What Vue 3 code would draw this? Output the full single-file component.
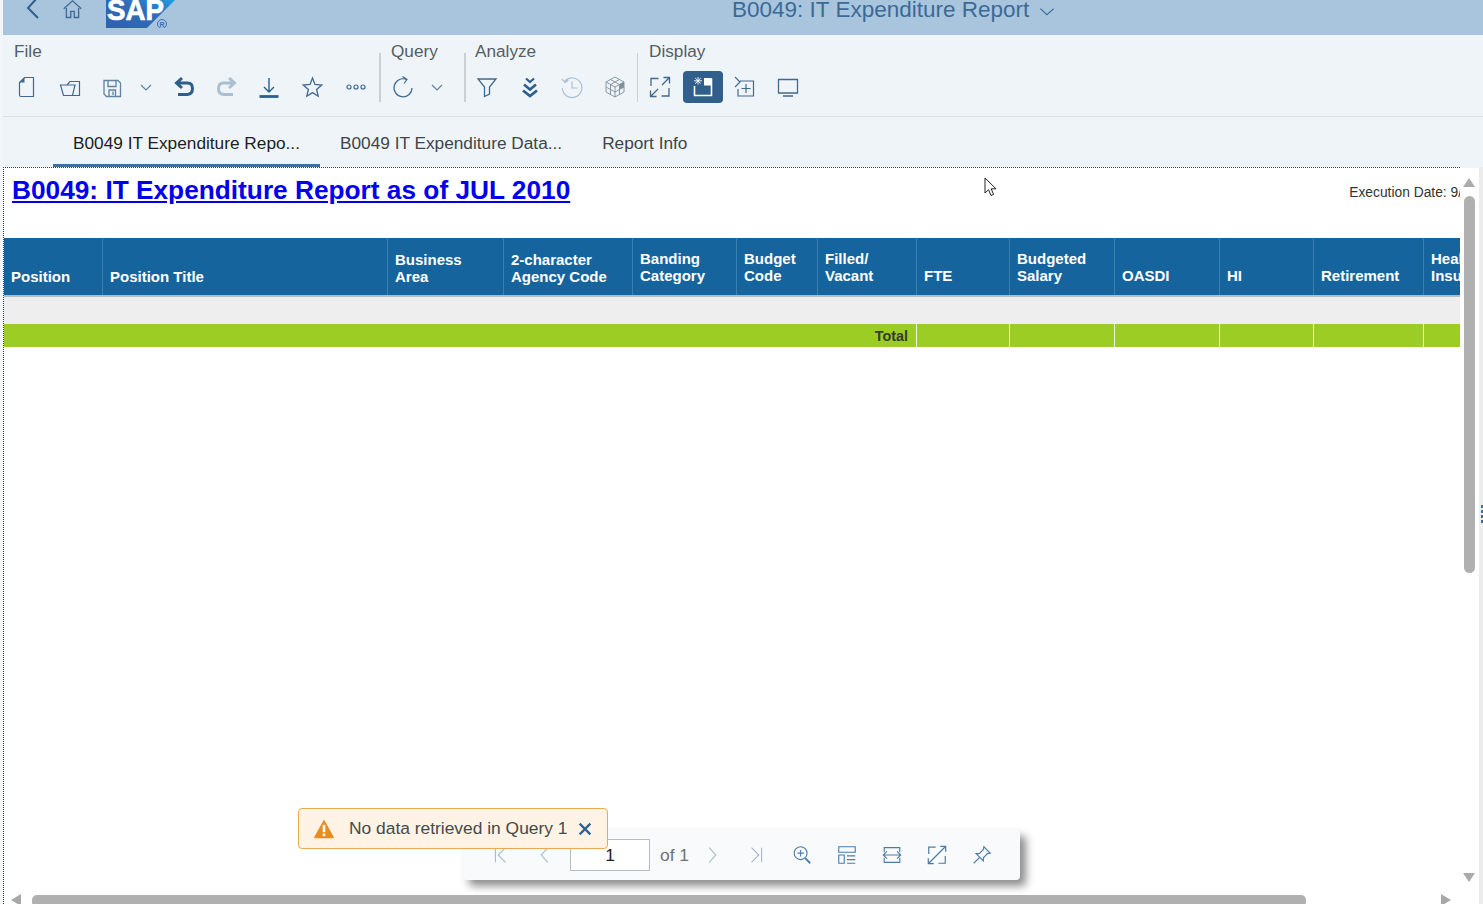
<script setup>
const icons = {
  doc: [{ d: 'M4.5 7.5 9.5 2.5H18.5V21.5H6q-1.5 0-1.5-1.5Z' }, { d: 'M4.5 7.5 9.5 2.5V7.5Z', f: 1 }],
  folder: [{ d: 'M2.5 10H17L14.5 20.5H5.5Z' }, { d: 'M9 10 12 6.5H21.5V20.5H14.5' }],
  save: [{ d: 'M4 5.5H18L20.5 8V21.5H6.5L4 19Z M8 5.5V11.5H16V5.5 M9 21.5V15H15.5V21.5 M13 16.5V20', w: 1.3 }],
  chev: [{ d: 'M7 10 12 15 17 10' }],
  undo: [{ d: 'M10 3 4.5 8 10 13 M4.5 8H15.5Q20.5 8 20.5 13.5T15.5 19.5H6', w: 3 }],
  redo: [{ d: 'M14 3 19.5 8 14 13 M19.5 8H8.5Q3.5 8 3.5 13.5T8.5 19.5H18', w: 3 }],
  down: [{ d: 'M12 3V17 M7 12 12 17 17 12', w: 1.4 }, { d: 'M2.5 21.5H21.5', w: 2.8 }],
  star: [{ d: 'M12.5 3 15 9.4 21.8 10 16.6 14.4 18.2 21.2 12.5 17.6 6.8 21.2 8.4 14.4 3.2 10 10 9.4Z', w: 1.3 }],
  more: [{ d: 'M7 12a2 2 0 1 1-4 0a2 2 0 1 1 4 0 M14 12a2 2 0 1 1-4 0a2 2 0 1 1 4 0 M21 12a2 2 0 1 1-4 0a2 2 0 1 1 4 0' }],
  refresh: [{ d: 'M15.5 4.5A9 9 0 1 0 21 13 M11.5 1.5 16 4.5 13 8.5' }],
  filter: [{ d: 'M3 4H21L14.5 12V19L9.5 21.5V12Z', w: 1.3 }],
  hier: [{ d: 'M8 3.5 12 7 16 3.5', w: 2.2 }, { d: 'M6 9.5 12 14.5 18 9.5', w: 2.6 }, { d: 'M5 15.5 12 21 19 15.5', w: 2.8 }],
  hist: [{ d: 'M5 6A9.8 9.8 0 1 1 2.3 13 M2 4 5 7.5 8.5 5 M12 6.5V13H17.5' }],
  cube: [{ d: 'M12 2 21 7V17L12 22 3 17V7Z M3 7 12 12 21 7M12 12V22 M7.5 4.5 16.5 9.5M16.5 4.5 7.5 9.5M3 12 12 17 21 12M7.5 9.5V19.5M16.5 9.5V19.5', w: 0.9 }, { d: 'M17 9 21 7V12L17 14Z', f: 1 }],
  full: [{ d: 'M10.5 3.5H3V11 M13.5 21H21V13 M21.5 2.5 14 10M15.5 2.5H21.5V8.5 M2.5 21.5 10 14M2.5 15.5V21.5H8.5', w: 1.3 }],
  fullLong: [{ d: 'M10.5 3.5H3V11 M13.5 21H21V13 M21.5 2.5 2.5 21.5 M15.5 2.5H21.5V8.5 M2.5 15.5V21.5H8.5', w: 1.3 }],
  page: [{ d: 'M3.5 11V20.5H20.5V3.5', w: 1.6 }, { d: 'M13 3H20.5V10.5H13Z', f: 1 }, { d: 'M7 2V9.5M3 5.8H11M4.2 3 9.8 8.6M9.8 3 4.2 8.6', w: 0.9 }],
  add: [{ d: 'M7 6H20.5V21H5V14 M2 2 7 7 2 12 M13 9V18 M8.5 13.5H17.5' }],
  screen: [{ d: 'M2.5 4.5H21.5V18H2.5Z M7 21H17', w: 1.3 }],
  first: [{ d: 'M7 4V20 M18 4 10 12 18 20' }],
  prev: [{ d: 'M15 4 8 12 15 20' }],
  next: [{ d: 'M9 4 16 12 9 20' }],
  last: [{ d: 'M17 4V20 M6 4 14 12 6 20' }],
  zoom: [{ d: 'M10.5 3a7 7 0 1 1 0 14a7 7 0 1 1 0-14 M10.5 6.5V13.5 M7 10H14' }, { d: 'M15.5 15.5 21 21', w: 2 }],
  layout: [{ d: 'M3 3H21V9H3Z M3 12H9V21H3Z M12 13H21 M12 17H21 M12 21H21' }],
  fit: [{ d: 'M3.5 9V4H20.5V9 M3.5 15V20H20.5V15 M6.5 8 2.5 12 6.5 16 M17.5 8 21.5 12 17.5 16 M3 12H21' }],
  pin: [{ d: 'M14 3 21 10 18 10.5 13.5 15 13.5 18.5 5.5 10.5 9 10.5 13.5 6Z M9.5 14.5 3 21' }]
}

const groups = [
  { label: 'File', cls: 'g-file', items: [
    { i: 'doc' }, { i: 'folder' }, { i: 'save', c: 'soft' }, { i: 'chev', c: 'narrow soft' },
    { i: 'undo', c: 'strong' }, { i: 'redo', c: 'off' }, { i: 'down', c: 'strong' }, { i: 'star' }, { i: 'more', c: 'moved' }
  ] },
  { label: 'Query', cls: 'g-query', items: [{ i: 'refresh' }, { i: 'chev', c: 'narrow soft' }] },
  { label: 'Analyze', cls: 'g-analyze', items: [{ i: 'filter' }, { i: 'hier', c: 'strong' }, { i: 'hist', c: 'off' }, { i: 'cube', c: 'grey' }] },
  { label: 'Display', cls: 'g-display', items: [{ i: 'full' }, { i: 'page', c: 'active' }, { i: 'add' }, { i: 'screen' }] }
]

const tabs = [
  { t: 'B0049 IT Expenditure Repo...', on: true },
  { t: 'B0049 IT Expenditure Data...' },
  { t: 'Report Info' }
]

const cols = [
  { l: ['Position'] }, { l: ['Position Title'] }, { l: ['Business', 'Area'] }, { l: ['2-character', 'Agency Code'] },
  { l: ['Banding', 'Category'], up: true }, { l: ['Budget', 'Code'], up: true }, { l: ['Filled/', 'Vacant'], up: true },
  { l: ['FTE'], up: true }, { l: ['Budgeted', 'Salary'], up: true }, { l: ['OASDI'], up: true }, { l: ['HI'], up: true },
  { l: ['Retirement'], up: true }, { l: ['Health', 'Insurance'], up: true }
]

const pager = [
  { i: 'first', c: 'off' }, { i: 'prev', c: 'off' }, { input: true },
  { i: 'next', c: 'off' }, { i: 'last', c: 'off' }, { i: 'zoom' }, { i: 'layout' }, { i: 'fit' }, { i: 'fullLong' }, { i: 'pin' }
]
</script>

<template>
  <div class="root">
    <header class="shell">
      <svg class="back" viewBox="0 0 24 24"><path d="M17 -3 7 8 17 18" /></svg>
      <svg class="home" viewBox="0 0 24 24"><path d="M2 10 12 1 22 10M5 9V20H10V13H14V20H19V9" /></svg>
      <svg class="logo" viewBox="0 0 72 28">
        <defs>
          <linearGradient id="sapg" x1="0" y1="1" x2="1" y2="0">
            <stop offset="0" stop-color="#2f60ad" />
            <stop offset="0.6" stop-color="#2f6cb8" />
            <stop offset="1" stop-color="#1c9fe0" />
          </linearGradient>
        </defs>
        <polygon points="0,0 69,0 41,28 0,28" fill="url(#sapg)" />
        <text x="1" y="20" class="logo-text" textLength="57" lengthAdjust="spacingAndGlyphs">SAP</text>
        <circle cx="56" cy="24" r="4.5" class="logo-ring" />
        <text x="53.6" y="26.5" class="logo-r">R</text>
      </svg>
      <span class="app-title">B0049: IT Expenditure Report</span>
      <svg class="title-chev" viewBox="0 0 24 24"><path d="M2 7 12 16 22 7" /></svg>
    </header>

    <section class="toolbar">
      <template v-for="(g, gi) in groups" :key="g.label">
        <div v-if="gi" class="sep" :class="{ thin: gi === 3 }"></div>
        <div class="group" :class="g.cls">
          <div class="glabel">{{ g.label }}</div>
          <div class="btns">
            <span v-for="(b, bi) in g.items" :key="bi" class="btn" :class="b.c">
              <svg viewBox="0 0 24 24" class="ic">
                <path v-for="(p, pi) in icons[b.i]" :key="pi" :d="p.d" :class="{ fillp: p.f }" :stroke-width="p.w || 1.2" />
              </svg>
            </span>
          </div>
        </div>
      </template>
    </section>

    <nav class="tabs">
      <span v-for="t in tabs" :key="t.t" class="tab" :class="{ on: t.on }">{{ t.t }}</span>
    </nav>

    <main class="main">
      <div class="report">
        <div class="body">
          <div class="rhead">
            <a class="rtitle">B0049: IT Expenditure Report as of JUL 2010</a>
            <span class="exec">Execution Date: 9/</span>
          </div>
          <div class="grid ghead">
            <div v-for="c in cols" :key="c.l[0]" class="hc" :class="{ up: c.up }">
              <div v-for="line in c.l" :key="line">{{ line }}</div>
            </div>
          </div>
          <div class="grey-row"></div>
          <div class="grid total">
            <div class="tl">Total</div>
            <div v-for="n in 6" :key="n" class="tc"></div>
          </div>
        </div>
        <div class="hbar">
          <i class="ar-l"></i>
          <i class="hthumb"></i>
          <i class="ar-r"></i>
        </div>
      </div>
      <aside class="vbar">
        <i class="ar-u"></i>
        <i class="vthumb"></i>
        <i class="grow"></i>
        <i class="ar-d"></i>
      </aside>
      <aside class="split">
        <i></i><i></i><i></i><i></i>
      </aside>
    </main>

    <div class="pager">
      <template v-for="(p, i) in pager" :key="i">
        <template v-if="p.input">
          <span class="pinput">1</span>
          <span class="of">of 1</span>
        </template>
        <span v-else class="pbtn" :class="p.c">
          <svg viewBox="0 0 24 24" class="pic">
            <path v-for="(s, si) in icons[p.i]" :key="si" :d="s.d" :stroke-width="s.w || 1.2" />
          </svg>
        </span>
      </template>
    </div>

    <div class="toast">
      <svg class="warn" viewBox="0 0 24 24">
        <path d="M12 1.5 22.5 20.5a1 1 0 0 1-.9 1.5H2.4a1 1 0 0 1-.9-1.5Z" />
        <rect x="10.6" y="7.5" width="2.8" height="8" />
        <rect x="10.6" y="17" width="2.8" height="2.8" />
      </svg>
      <span class="tmsg">No data retrieved in Query 1</span>
      <svg class="tx" viewBox="0 0 24 24"><path d="M4 4 20 20M20 4 4 20" /></svg>
    </div>

    <svg class="cursor" viewBox="0 0 14 20">
      <path d="M1 1V16L4.6 12.7 7 18.5 9.6 17.4 7.2 11.8H12Z" />
    </svg>
  </div>
</template>

<style scoped>
.root {
  position: relative;
  width: 1483px;
  height: 904px;
  box-sizing: border-box;
  padding-left: 3px;
  display: flex;
  flex-direction: column;
  overflow: hidden;
  background: #f3f6f9;
  font-family: "Liberation Sans", Arial, sans-serif;
}

/* Shell */
.shell {
  height: 35px;
  margin-bottom: 1px;
  flex: none;
  display: flex;
  align-items: flex-start;
  background: #a9c5dd;
  overflow: hidden;
}
.shell svg { fill: none; flex: none; }
.back { width: 24px; height: 24px; margin-left: 18px; stroke: #2f5f8c; stroke-width: 2; }
.home { width: 21px; height: 21px; margin-left: 17px; stroke: #3f6a91; stroke-width: 1.5; }
.logo { width: 72px; height: 28px; margin-left: 23px; }
.logo-text { font: 700 30px "Liberation Sans", sans-serif; fill: #fff; stroke: #fff; stroke-width: 0.7; }
.logo-ring { fill: none; stroke: #3a70b5; stroke-width: 1; }
.logo-r { font: 700 7px "Liberation Sans", sans-serif; fill: #3a70b5; }
.app-title {
  margin-left: 554px;
  line-height: 20px;
  font-size: 22.5px;
  color: #3b6a96;
  white-space: nowrap;
}
.title-chev { width: 16px; height: 16px; margin: 4px 0 0 10px; stroke: #3b6a96; stroke-width: 1.8; }

/* Toolbar */
.toolbar {
  height: 80px;
  flex: none;
  display: flex;
  align-items: flex-start;
  background: #eff4f9;
  border-bottom: 1px solid #dadfe4;
}
.group { padding-top: 5px; }
.glabel { line-height: 21px; font-size: 17.2px; color: #555c63; white-space: nowrap; }
.btns { display: flex; margin-top: 9px; height: 32px; }
.btn {
  width: 42.5px;
  height: 32px;
  display: flex;
  align-items: center;
  justify-content: center;
  border-radius: 4px;
  color: #40698f;
  flex: none;
}
.btn.narrow { width: 24px; margin-right: 5.5px; }
.btn.soft { color: #5f83a3; }
.btn.strong { color: #2c5f8b; }
.btn.off { color: #a9c0d3; }
.btn.grey { color: #7f8f9e; }
.btn.moved { margin-left: 1.5px; }
.btn.active { background: #2f5f8a; color: #fff; width: 40px; margin: 0 1.25px; }
.ic { width: 24px; height: 24px; fill: none; stroke: currentColor; }
.fillp { fill: currentColor; stroke: none; }
.g-file { margin-left: 3px; width: 373px; }
.g-file .glabel { margin-left: 8px; }
.sep { width: 2px; height: 49px; margin-top: 17px; background: #cad0d6; flex: none; }
.sep.thin { width: 1px; margin-right: 1px; }
.g-query { width: 82px; margin-left: 1px; }
.g-query .glabel { margin-left: 9px; }
.g-query .btn.narrow { margin-right: 0; }
.g-analyze { width: 171px; }
.g-analyze .glabel { margin-left: 9px; }
.g-display .glabel { margin-left: 10px; }

/* Tabs */
.tabs {
  height: 50px;
  flex: none;
  box-sizing: border-box;
  display: flex;
  padding-left: 50px;
  background: #eff4f9;
}
.tab {
  height: 50px;
  box-sizing: border-box;
  padding: 0 20px;
  line-height: 52px;
  font-size: 17.25px;
  color: #3f4549;
  white-space: nowrap;
}
.tab.on { color: #1b1f22; border-bottom: 3px solid #3f709d; }

/* Report */
.main { flex: 1; min-height: 0; display: flex; }
.report {
  width: 1457px;
  flex: none;
  box-sizing: border-box;
  display: flex;
  flex-direction: column;
  background: #fff;
  border-top: 1px dotted #3c3c3c;
  border-left: 1px dotted #3c3c3c;
}
.body { flex: 1; min-height: 0; overflow: hidden; }
.rhead {
  height: 70px;
  box-sizing: border-box;
  padding: 7px 0 0 8px;
  display: flex;
  justify-content: space-between;
  align-items: flex-start;
}
.rtitle {
  font-size: 26.25px;
  line-height: 30px;
  font-weight: 700;
  color: #0000ee;
  text-decoration: underline;
  white-space: nowrap;
}
.exec { margin: 10px -2px 0 0; font-size: 13.8px; line-height: 16px; color: #333; white-space: nowrap; }
.grid {
  display: grid;
  grid-template-columns: 99px 285px 116px 129px 104px 81px 99px 93px 105px 105px 94px 110px 1fr;
}
.ghead {
  height: 59px;
  box-sizing: border-box;
  background: #16649d;
  border-bottom: 2px solid #b7bcc0;
}
.hc {
  box-sizing: border-box;
  padding: 0 0 10px 7px;
  display: flex;
  flex-direction: column;
  justify-content: flex-end;
  border-right: 1px solid #3d7fae;
  color: #fff;
  font-size: 15px;
  line-height: 17px;
  font-weight: 700;
  white-space: nowrap;
  overflow: hidden;
}
.hc.up { padding-bottom: 11px; }
.hc:last-child { border-right: 0; }
.grey-row { height: 27px; background: #eeeeee; }
.total { height: 23px; background: #9ccd25; }
.tl {
  grid-column: 1 / span 7;
  border-right: 1px solid #f2f7e2;
  box-sizing: border-box;
  padding-right: 8px;
  text-align: right;
  font-size: 14.4px;
  line-height: 24px;
  font-weight: 700;
  color: #353b2a;
}
.tc { border-right: 1px solid #f2f7e2; }
.tc:last-child { border-right: 0; }
.hbar { height: 9px; flex: none; display: flex; align-items: flex-start; }
.hbar i { display: block; flex: none; }
.hthumb { width: 1274px; height: 12px; margin-left: 11px; border-radius: 5px; background: #b0b0b0; }
.ar-l {
  margin: -1px 0 0 7px;
  border-style: solid;
  border-width: 6px 10px 6px 0;
  border-color: transparent #a8a8a8 transparent transparent;
}
.ar-r {
  margin: -1px 0 0 135px;
  border-style: solid;
  border-width: 6px 0 6px 10px;
  border-color: transparent transparent transparent #a8a8a8;
}

.vbar {
  width: 19px;
  flex: none;
  box-sizing: border-box;
  padding-top: 10px;
  display: flex;
  flex-direction: column;
  background: #fff;
  border-top: 1px solid #eff4f9;
}
.vbar i { display: block; flex: none; }
.ar-u {
  margin-left: 3px;
  width: 0;
  border-style: solid;
  border-width: 0 6px 9px;
  border-color: transparent transparent #ababab;
}
.vthumb { width: 11px; height: 377px; margin: 9px 0 0 4px; border-radius: 6px; background: #b0b0b0; }
.vbar .grow { flex: 1; }
.ar-d {
  margin: 0 0 22px 3px;
  width: 0;
  border-style: solid;
  border-width: 9px 6px 0;
  border-color: #ababab transparent transparent;
}
.split {
  width: 4px;
  flex: none;
  box-sizing: border-box;
  padding: 338px 0 0 2px;
  background: #ececec;
}
.split i { display: block; width: 2px; height: 3px; margin-bottom: 2px; background: #3d6d98; }

/* Pager */
.pager {
  position: absolute;
  left: 463px;
  top: 830px;
  width: 557px;
  height: 50px;
  box-sizing: border-box;
  padding-left: 14.5px;
  display: flex;
  align-items: center;
  border-radius: 4px;
  background: #f8fafc;
  box-shadow: 6px 6px 8px rgba(0, 0, 0, 0.45);
}
.pbtn {
  width: 45px;
  height: 32px;
  flex: none;
  display: flex;
  align-items: center;
  justify-content: center;
  color: #4b7ba7;
}
.pbtn.off { color: #a8b9c9; }
.pic { width: 22px; height: 22px; fill: none; stroke: currentColor; }
.pinput {
  width: 80px;
  height: 32px;
  margin-left: 2.5px;
  flex: none;
  box-sizing: border-box;
  border: 1px solid #b4bcc4;
  background: #fff;
  text-align: center;
  font-size: 17.4px;
  line-height: 31px;
  color: #222;
}
.of { width: 29.5px; margin-left: 10px; flex: none; font-size: 17.4px; color: #6a7279; white-space: nowrap; }

/* Toast */
.toast {
  position: absolute;
  left: 298px;
  top: 808px;
  width: 310px;
  height: 41px;
  box-sizing: border-box;
  padding-left: 14px;
  display: flex;
  align-items: center;
  border: 1px solid #e9ab52;
  border-radius: 4px;
  background: #fef3e4;
}
.warn { width: 22px; height: 22px; flex: none; }
.warn path { fill: #e78c22; }
.warn rect { fill: #fff; }
.tmsg { margin-left: 14px; flex: none; font-size: 17.4px; color: #44494e; white-space: nowrap; }
.tx { width: 16px; height: 16px; margin-left: 10px; flex: none; fill: none; stroke: #2f6290; stroke-width: 3.4; }

.cursor {
  position: absolute;
  left: 984px;
  top: 177px;
  width: 14px;
  height: 20px;
  fill: #fff;
  stroke: #222;
  stroke-width: 1;
}
</style>

<style>
html, body { margin: 0; overflow: hidden; background: #fff; }
</style>
